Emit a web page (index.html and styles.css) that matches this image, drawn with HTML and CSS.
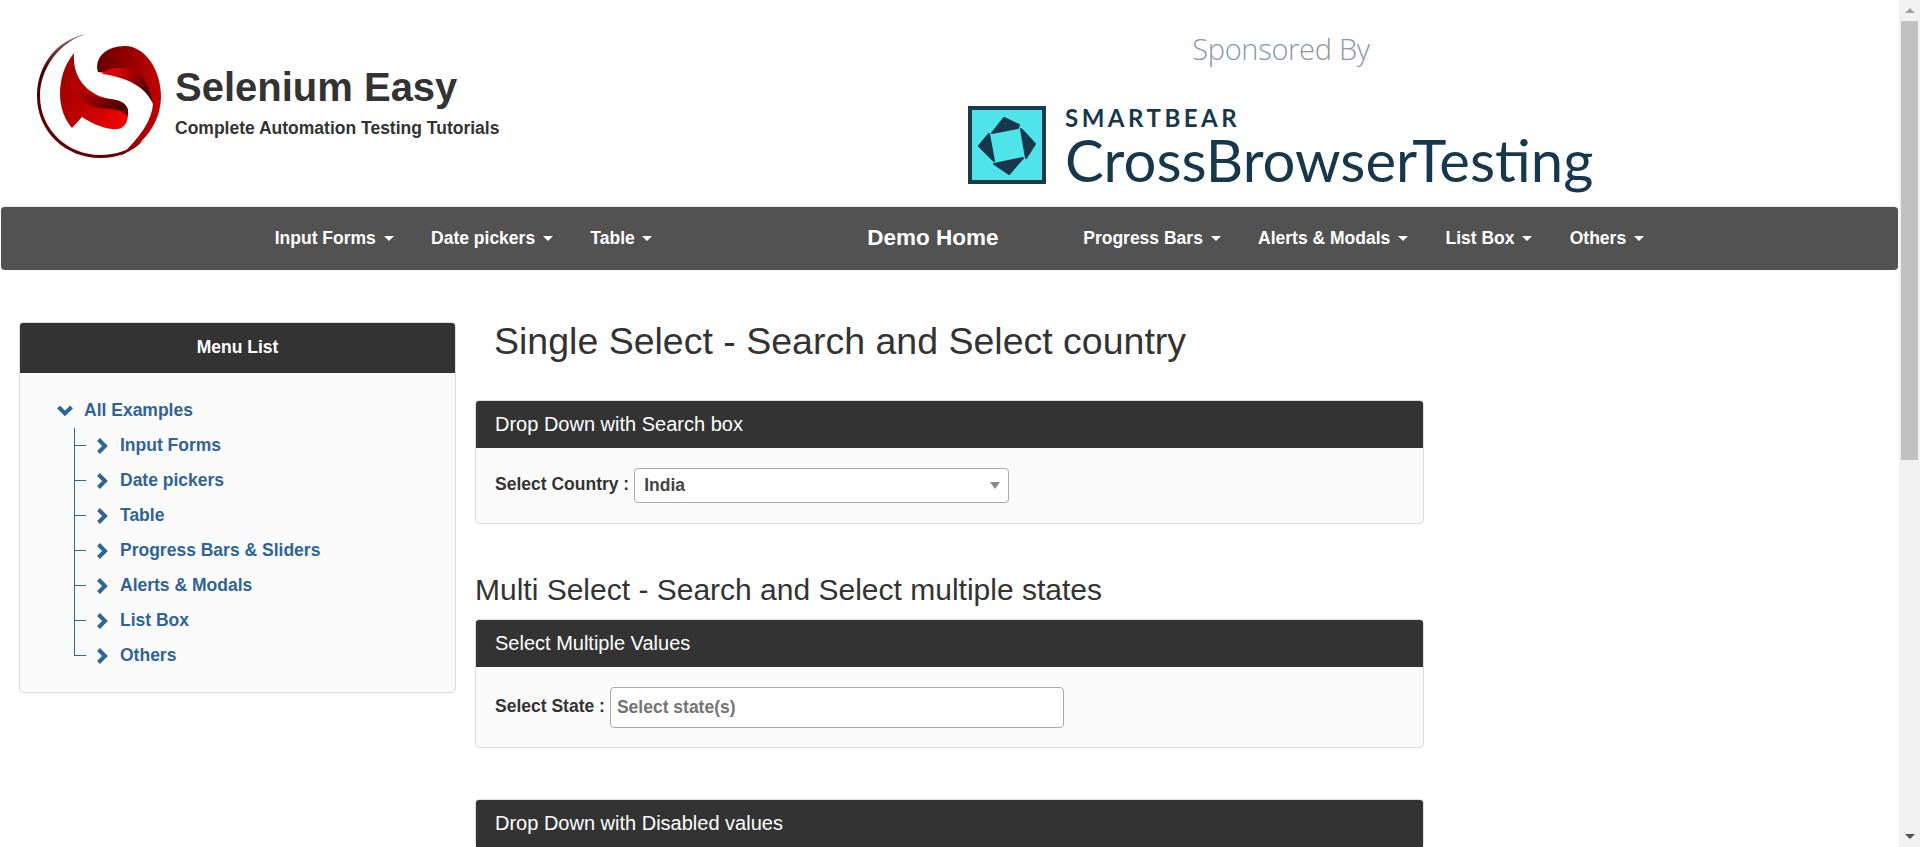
FILE: index.html
```html
<!DOCTYPE html>
<html lang="en">
<head>
  <meta charset="UTF-8" />
  <meta name="viewport" content="width=device-width, initial-scale=1.0"/>
  <title>Selenium Easy - Single Select</title>
  <link rel="stylesheet" href="styles.css">
</head>
<body>

<div class="window">
  <div class="page">

    <div class="topbar">
      <div class="brand">
        <svg class="brand-logo" viewBox="15 12 128 128" width="128" height="128">
          <defs>
            <linearGradient id="ringGrad" x1="0.7" y1="0" x2="0.5" y2="1">
              <stop offset="0" stop-color="#b08080"/>
              <stop offset="0.4" stop-color="#4a0000"/>
              <stop offset="1" stop-color="#6a0000"/>
            </linearGradient>
            <linearGradient id="bladeGrad" x1="0" y1="0.2" x2="1" y2="0.8">
              <stop offset="0" stop-color="#9c0505"/>
              <stop offset="0.5" stop-color="#c00000"/>
              <stop offset="1" stop-color="#f50000"/>
            </linearGradient>
            <linearGradient id="foldGrad" x1="0" y1="0" x2="1" y2="0.4">
              <stop offset="0" stop-color="#d80000"/>
              <stop offset="1" stop-color="#500000"/>
            </linearGradient>
            <linearGradient id="lobeGrad" x1="0" y1="0" x2="1" y2="0">
              <stop offset="0" stop-color="#660000"/>
              <stop offset="1" stop-color="#c40000"/>
            </linearGradient>
            <linearGradient id="bandGrad" x1="0" y1="0" x2="1" y2="0.3">
              <stop offset="0" stop-color="#fa0000"/>
              <stop offset="0.55" stop-color="#b00000"/>
              <stop offset="1" stop-color="#4a0000"/>
            </linearGradient>
          </defs>
          <path fill="url(#ringGrad)" d="M66 14 C36 20 17 46 17 76 C17 112 46 138 80 138 C98 138 112 132 124 120 C110 130 96 135 80 135 C48 135 20 110 20 76 C20 48 40 22 66 14 Z"/>
          <path fill="url(#bladeGrad)" d="M54 33 C44 45 40 60 40 74 C40 88 45 100 52 108 L62 97 C75 106 90 110 98 109 C106 108 109 98 108 90 C106 82 98 80 90 79 C72 76 52 62 54 33 Z"/>
          <path fill="url(#foldGrad)" d="M50 58 C58 72 74 78 90 79 C98 80 106 82 108 90 C108 92 108 94 107 96 C102 88 90 90 78 88 C64 85 54 74 50 58 Z"/>
          <path fill="url(#lobeGrad)" d="M78 52 C74 38 86 26 105 26 C125 26 141 50 141 76 C141 102 125 124 100 136 C120 118 132 100 133 84 C128 65 110 55 78 52 Z"/>
          <path fill="url(#bandGrad)" d="M82 54 C90 46 108 46 120 55 C127 62 131 72 133 84 C125 65 104 57 82 54 Z"/>
        </svg>
        <div class="brand-text">
          <div class="brand-name">Selenium Easy</div>
          <div class="brand-tag">Complete Automation Testing Tutorials</div>
        </div>
      </div>
      <div class="sponsor">
        <div class="sponsor-label">Sponsored By</div>
        <div class="sponsor-logo">
          <svg class="sponsor-mark" viewBox="0 0 78 78" width="78" height="80">
            <rect x="2" y="2" width="74" height="74" fill="#4fe3ea" stroke="#1b3a4f" stroke-width="4"/>
            <g fill="#17374d" stroke="#17374d" stroke-width="2" stroke-linejoin="round">
              <polygon points="24,27 36,12 51,19 50,22"/>
              <polygon points="53,23 67,38 58,52"/>
              <polygon points="26,58 55,52 41,68"/>
              <polygon points="21,28 11,40 26,55"/>
            </g>
          </svg>
          <div class="sponsor-words">
            <div class="sponsor-top">SMARTBEAR</div>
            <div class="sponsor-name">CrossBrowserTesting</div>
          </div>
        </div>
      </div>
    </div>

    <div class="navbar">
      <ul class="nav-list">
        <li><a href="#">Input Forms<span class="caret"></span></a></li>
        <li><a href="#">Date pickers<span class="caret"></span></a></li>
        <li><a href="#">Table<span class="caret"></span></a></li>
      </ul>
      <a href="#" class="nav-home">Demo Home</a>
      <ul class="nav-list">
        <li><a href="#">Progress Bars<span class="caret"></span></a></li>
        <li><a href="#">Alerts &amp; Modals<span class="caret"></span></a></li>
        <li><a href="#">List Box<span class="caret"></span></a></li>
        <li><a href="#">Others<span class="caret"></span></a></li>
      </ul>
    </div>

    <div class="content">
      <div class="sidebar">
        <div class="side-head">Menu List</div>
        <div class="side-body">
          <div class="tree-root">
            <svg class="chev-down" viewBox="0 0 16 12" width="16" height="12"><polyline points="1.5,2 8,8.5 14.5,2" /></svg>
            <a href="#">All Examples</a>
          </div>
          <ul class="tree">
            <li><svg class="chev" viewBox="0 0 12 16" width="12" height="16"><polyline points="2.5,1.5 9,8 2.5,14.5" /></svg><a href="#">Input Forms</a></li>
            <li><svg class="chev" viewBox="0 0 12 16" width="12" height="16"><polyline points="2.5,1.5 9,8 2.5,14.5" /></svg><a href="#">Date pickers</a></li>
            <li><svg class="chev" viewBox="0 0 12 16" width="12" height="16"><polyline points="2.5,1.5 9,8 2.5,14.5" /></svg><a href="#">Table</a></li>
            <li><svg class="chev" viewBox="0 0 12 16" width="12" height="16"><polyline points="2.5,1.5 9,8 2.5,14.5" /></svg><a href="#">Progress Bars &amp; Sliders</a></li>
            <li><svg class="chev" viewBox="0 0 12 16" width="12" height="16"><polyline points="2.5,1.5 9,8 2.5,14.5" /></svg><a href="#">Alerts &amp; Modals</a></li>
            <li><svg class="chev" viewBox="0 0 12 16" width="12" height="16"><polyline points="2.5,1.5 9,8 2.5,14.5" /></svg><a href="#">List Box</a></li>
            <li><svg class="chev" viewBox="0 0 12 16" width="12" height="16"><polyline points="2.5,1.5 9,8 2.5,14.5" /></svg><a href="#">Others</a></li>
          </ul>
        </div>
      </div>

      <div class="main">
        <h2 class="main-title">Single Select - Search and Select country</h2>

        <div class="panel">
          <div class="panel-head">Drop Down with Search box</div>
          <div class="panel-body">
            <label class="field-label">Select Country :</label>
            <div class="select-box"><span>India</span><span class="select-arrow"></span></div>
          </div>
        </div>

        <h3 class="section-title">Multi Select - Search and Select multiple states</h3>

        <div class="panel">
          <div class="panel-head">Select Multiple Values</div>
          <div class="panel-body panel-body-tight">
            <label class="field-label">Select State :</label>
            <div class="multi-box">Select state(s)</div>
          </div>
        </div>

        <div class="panel panel-last">
          <div class="panel-head">Drop Down with Disabled values</div>
        </div>
      </div>
    </div>

  </div>

  <div class="scrollbar">
    <div class="scroll-btn"><span class="arrow-up"></span></div>
    <div class="scroll-thumb"></div>
    <div class="scroll-rest"></div>
    <div class="scroll-btn"><span class="arrow-down"></span></div>
  </div>
</div>

</body>
</html>
```

FILE: styles.css
```css
html, body {
  margin: 0;
  height: 100%;
  overflow: hidden;
}
body {
  font-family: "Liberation Sans", Arial, sans-serif;
  font-size: 17.5px;
  color: #333;
  background-color: #fff;
}
a {
  text-decoration: none;
}
ul {
  list-style: none;
  margin: 0;
  padding: 0;
}

.window {
  display: flex;
  height: 847px;
}
.page {
  flex: 1;
  min-width: 0;
  overflow: hidden;
}

/* scrollbar */
.scrollbar {
  width: 21px;
  background-color: #f1f1f1;
  display: flex;
  flex-direction: column;
}
.scroll-btn {
  height: 21px;
  display: flex;
  align-items: center;
  justify-content: center;
}
.arrow-up {
  border-left: 5px solid transparent;
  border-right: 5px solid transparent;
  border-bottom: 5px solid #a3a3a3;
}
.arrow-down {
  border-left: 5px solid transparent;
  border-right: 5px solid transparent;
  border-top: 5px solid #505050;
}
.scroll-thumb {
  height: 439px;
  margin: 0 2px;
  background-color: #c1c1c1;
}
.scroll-rest {
  flex: 1;
}

/* top banner */
.topbar {
  height: 206px;
  display: flex;
}
.brand {
  display: flex;
  align-items: flex-start;
  padding: 32px 0 0 35px;
  width: 933px;
  box-sizing: border-box;
}
.brand-text {
  margin: 32px 0 0 12px;
}
.brand-name {
  font-size: 40px;
  font-weight: bold;
  line-height: 46px;
}
.brand-tag {
  font-size: 17.5px;
  font-weight: bold;
  line-height: 20px;
  margin-top: 8px;
}
.sponsor-label {
  font-family: "Open Sans", sans-serif;
  font-weight: 300;
  font-size: 29px;
  line-height: 40px;
  letter-spacing: -0.3px;
  color: #8a97a5;
  text-align: center;
  margin-top: 29px;
  width: 696px;
}
.sponsor-logo {
  display: flex;
  margin: 36px 0 0 35px;
}
.sponsor-words {
  margin-left: 19px;
  color: #17374d;
  font-family: Lato, sans-serif;
}
.sponsor-top {
  font-weight: 700;
  font-size: 24px;
  letter-spacing: 3.5px;
  line-height: 26px;
}
.sponsor-name {
  font-size: 58px;
  line-height: 58px;
  white-space: nowrap;
}

/* nav */
.navbar {
  margin: 0 1px;
  height: 64px;
  background-color: #525252;
  border-radius: 4px;
  border-top: 1px solid #e7e7e7;
  box-sizing: border-box;
  display: flex;
  align-items: center;
  padding: 0 0 2px 255px;
  color: #fff;
}
.nav-list {
  display: flex;
}
.nav-list a {
  display: block;
  padding: 0 18.75px;
  color: #fff;
  font-weight: bold;
  font-size: 17.5px;
  line-height: 60px;
}
.caret {
  display: inline-block;
  margin-left: 7.7px;
  vertical-align: middle;
  border-top: 5px solid #fff;
  border-left: 5px solid transparent;
  border-right: 5px solid transparent;
}
.nav-home {
  color: #fff;
  font-weight: bold;
  font-size: 22.5px;
  margin: 0 66px 0 196px;
}

/* body */
.content {
  display: flex;
  align-items: flex-start;
  padding: 52px 0 0 19px;
}
.sidebar {
  width: 437px;
  box-sizing: border-box;
  border: 1px solid #ddd;
  border-radius: 4px;
  background-color: #fbfbfb;
}
.side-head {
  background-color: #333;
  color: #fff;
  font-weight: bold;
  text-align: center;
  height: 50px;
  line-height: 48px;
  border-radius: 3px 3px 0 0;
}
.side-body {
  padding: 20px 0 19px 37px;
}
.side-body a {
  color: #2f6496;
  font-weight: bold;
}
.tree-root {
  height: 35px;
  display: flex;
  align-items: center;
}
.chev-down {
  margin-right: 11px;
}
.chev-down polyline, .chev polyline {
  fill: none;
  stroke: #2f6496;
  stroke-width: 4;
}
.tree {
  margin-left: 17px;
}
.tree li {
  position: relative;
  height: 35px;
  display: flex;
  align-items: center;
  padding-left: 22px;
}
.tree li::before {
  content: "";
  position: absolute;
  left: 0;
  top: 0;
  width: 11px;
  height: 17px;
  border-left: 1px solid #2f6496;
  border-bottom: 1px solid #2f6496;
}
.tree li:not(:last-child)::after {
  content: "";
  position: absolute;
  left: 0;
  top: 0;
  bottom: 0;
  border-left: 1px solid #2f6496;
}
.tree .chev {
  margin-right: 12px;
}

.main {
  width: 949px;
  margin-left: 19px;
}
.main-title {
  font-size: 37.5px;
  font-weight: normal;
  line-height: 38px;
  margin: 0 0 40px 19px;
}
.section-title {
  font-size: 30px;
  font-weight: normal;
  line-height: 34px;
  margin: 49px 0 12px;
}
.panel {
  border: 1px solid #ddd;
  border-radius: 4px;
  background-color: #fbfbfb;
}
.panel-last {
  margin-top: 51px;
}
.panel-head {
  background-color: #333;
  color: #fff;
  font-size: 20px;
  height: 47px;
  line-height: 47px;
  padding-left: 19px;
  border-radius: 3px 3px 0 0;
}
.panel-body {
  display: flex;
  align-items: center;
  padding: 20px 19px;
}
.panel-body-tight {
  padding-bottom: 19px;
}
.field-label {
  font-weight: bold;
  margin-right: 5px;
  padding-bottom: 3px;
}
.select-box {
  width: 375px;
  height: 35px;
  box-sizing: border-box;
  border: 1px solid #aaa;
  border-radius: 4px;
  background-color: #fff;
  display: flex;
  align-items: center;
  justify-content: space-between;
  padding: 0 8px 0 9px;
  font-weight: bold;
  color: #444;
}
.select-arrow {
  border-top: 7px solid #888;
  border-left: 5px solid transparent;
  border-right: 5px solid transparent;
}
.multi-box {
  width: 454px;
  height: 41px;
  box-sizing: border-box;
  border: 1px solid #aaa;
  border-radius: 4px;
  background-color: #fff;
  line-height: 39px;
  padding-left: 6px;
  font-weight: bold;
  color: #757575;
}
```
